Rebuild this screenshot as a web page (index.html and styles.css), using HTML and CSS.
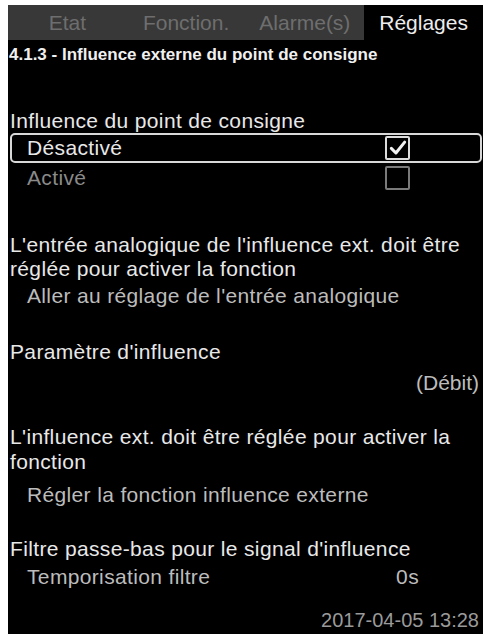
FILE: index.html
```html
<!DOCTYPE html>
<html lang="fr">
<head>
<meta charset="utf-8">
<link rel="stylesheet" href="styles.css">
</head>
<body>
<div class="screen">
  <div class="tabs">
    <div class="tab">Etat</div>
    <div class="tab">Fonction.</div>
    <div class="tab">Alarme(s)</div>
    <div class="tab active">Réglages</div>
  </div>
  <div class="title">4.1.3 - Influence externe du point de consigne</div>

  <div class="heading h-first">Influence du point de consigne</div>
  <div class="option selected">
    <span class="opt-label">Désactivé</span>
    <span class="check on">
      <svg viewBox="0 0 24 24" width="20" height="20"><path d="M4 12.5 L9.5 18 L20 5" fill="none" stroke="#f2f2f2" stroke-width="3.6" stroke-linecap="round" stroke-linejoin="round"/></svg>
    </span>
  </div>
  <div class="option">
    <span class="opt-label dim">Activé</span>
    <span class="check"></span>
  </div>

  <div class="para p-analog">L'entrée analogique de l'influence ext. doit être réglée pour activer la fonction</div>
  <div class="sub">Aller au réglage de l'entrée analogique</div>

  <div class="heading h-param">Paramètre d'influence</div>
  <div class="value-right">(Débit)</div>

  <div class="para p-ext">L'influence ext. doit être réglée pour activer la fonction</div>
  <div class="sub sub-ext">Régler la fonction influence externe</div>

  <div class="heading h-filter">Filtre passe-bas pour le signal d'influence</div>
  <div class="sub row-val">
    <span>Temporisation filtre</span>
    <span class="val">0s</span>
  </div>

  <div class="date">2017-04-05 13:28</div>
</div>
</body>
</html>
```
FILE: styles.css
```css
html, body {
  margin: 0;
  padding: 0;
  background: #ffffff;
}
body {
  padding: 5px 0 0 8px;
  font-family: "Liberation Sans", Arial, sans-serif;
}
.screen {
  width: 475px;
  height: 629px;
  background: #000;
  color: #e8e8e8;
  overflow: hidden;
  font-size: 21px;
  letter-spacing: 0.35px;
}
.tabs {
  display: grid;
  grid-template-columns: repeat(4, 1fr);
  height: 35px;
  background: #383838;
  letter-spacing: 0;
}
.tab {
  display: flex;
  align-items: center;
  justify-content: center;
  color: #6e6e6e;
  font-size: 21px;
}
.tab.active {
  background: #000;
  color: #ececec;
}
.title {
  height: 30px;
  line-height: 30px;
  font-size: 17px;
  font-weight: bold;
  letter-spacing: 0;
  padding-left: 1px;
  color: #f0f0f0;
}
.heading {
  line-height: 24px;
  padding-left: 2px;
}
.h-first { margin-top: 39px; }
.option {
  display: flex;
  align-items: center;
  justify-content: space-between;
  height: 30px;
  box-sizing: border-box;
  margin: 0 1px 0 2px;
  padding: 0 70px 0 15px;
  border: 2px solid transparent;
  border-radius: 5px;
}
.option.selected {
  border-color: #d8d8d8;
}
.opt-label { color: #e8e8e8; }
.opt-label.dim { color: #8a8a8a; }
.check {
  width: 25px;
  height: 24px;
  box-sizing: border-box;
  border: 2px solid #7a7a7a;
  border-radius: 2px;
  display: flex;
  align-items: center;
  justify-content: center;
}
.check.on {
  border-color: #dcdcdc;
}
.para {
  line-height: 24px;
  padding-left: 2px;
  padding-right: 2px;
}
.p-analog { margin-top: 40px; }
.sub {
  line-height: 30px;
  padding-left: 19px;
  color: #bcbcbc;
}
.h-param { margin-top: 29px; }
.value-right {
  margin-top: 4px;
  line-height: 30px;
  text-align: right;
  padding-right: 4px;
  color: #bcbcbc;
  letter-spacing: 0;
}
.p-ext {
  margin-top: 26px;
  line-height: 25px;
}
.sub-ext { margin-top: 6px; }
.h-filter { margin-top: 27px; }
.row-val {
  display: flex;
  justify-content: space-between;
  padding-right: 64px;
  line-height: 28px;
  margin-top: 2px;
}
.date {
  margin-top: 17px;
  text-align: right;
  padding-right: 4px;
  color: #9a9a9a;
  line-height: 24px;
  font-size: 20px;
  letter-spacing: 0;
}
```
